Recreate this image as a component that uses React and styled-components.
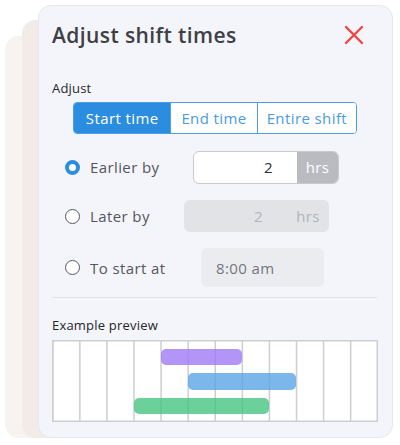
import React from "react";
import styled, { createGlobalStyle } from "styled-components";

const Global = createGlobalStyle`
  html, body { margin: 0; padding: 0; background: #ffffff; }
  body { font-family: "Open Sans", "Noto Sans", sans-serif; }
  * { box-sizing: border-box; }
`;

const Stage = styled.div`
  position: relative;
  width: 400px;
  height: 445px;
  padding: 5px 7px 0 38px;
`;

const BackCard = styled.div`
  position: absolute;
  left: ${(p) => p.$left}px;
  top: ${(p) => p.$top}px;
  width: 120px;
  bottom: 7px;
  border-radius: 14px;
  background: ${(p) => p.$bg};
`;

const Card = styled.div`
  position: relative;
  height: 433px;
  background: #f4f5fa;
  border: 1px solid #e7e8ee;
  border-radius: 13px;
  padding: 9px 14px 0 13px;
  display: flex;
  flex-direction: column;
  color: #2d2e33;
`;

const Header = styled.div`
  height: 40px;
  display: flex;
  align-items: center;
  justify-content: space-between;
  padding-right: 14px;
`;

const Title = styled.h1`
  margin: 0;
  font-size: 21px;
  font-weight: 600;
  color: #3f4046;
  letter-spacing: 0.4px;
`;

const Label = styled.div`
  margin-top: ${(p) => p.$mt}px;
  font-size: 13px;
  line-height: 18px;
  font-weight: 500;
  color: #25262b;
  letter-spacing: 0.2px;
`;

const Segmented = styled.div`
  margin: 5px 0 0 21px;
  display: flex;
  width: 284px;
  height: 32px;
  border: 1.5px solid #4d9de3;
  border-radius: 4px;
  overflow: hidden;
  background: #fff;
`;

const Segment = styled.div`
  width: ${(p) => p.$w}px;
  display: flex;
  align-items: center;
  justify-content: center;
  font-size: 15px;
  letter-spacing: 0.4px;
  background: ${(p) => (p.$active ? "#2b8de0" : "#ffffff")};
  color: ${(p) => (p.$active ? "#ffffff" : "#4a9be3")};
  & + & { border-left: 1.5px solid #4d9de3; }
`;

const Options = styled.div`
  margin-top: 16px;
  padding-left: 13px;
  display: flex;
  flex-direction: column;
  gap: 15px;
`;

const Row = styled.div`
  display: flex;
  align-items: center;
  height: ${(p) => p.$h}px;
`;

const Radio = styled.span`
  width: 15px;
  height: 15px;
  border-radius: 50%;
  flex: none;
  border: ${(p) => (p.$checked ? "4px solid #2b8de0" : "1.5px solid #55565c")};
  background: #fff;
`;

const OptLabel = styled.span`
  margin-left: 10px;
  width: 90px;
  font-size: 15px;
  letter-spacing: 0.4px;
  color: #55565b;
`;

const InputGroup = styled.div`
  margin-left: ${(p) => p.$ml}px;
  width: ${(p) => p.$w}px;
  height: ${(p) => p.$h}px;
  display: flex;
  border-radius: 6px;
  overflow: hidden;
  background: ${(p) => p.$bg};
  border: ${(p) => (p.$bordered ? "1px solid #c9cacf" : "none")};
`;

const Value = styled.div`
  flex: 1;
  display: flex;
  align-items: center;
  justify-content: ${(p) => (p.$left ? "flex-start" : "flex-end")};
  padding: ${(p) => (p.$left ? "0 0 0 15px" : "0 24px 0 0")};
  font-size: 15px;
  letter-spacing: 0.4px;
  color: ${(p) => p.$color};
`;

const Suffix = styled.div`
  width: ${(p) => p.$w}px;
  display: flex;
  align-items: center;
  justify-content: center;
  font-size: 15px;
  letter-spacing: 0.3px;
  background: ${(p) => p.$bg};
  color: ${(p) => p.$color};
`;

const Divider = styled.hr`
  margin: 10px 1px 0 0;
  border: none;
  border-top: 1.5px solid #e0e1e7;
`;

const Chart = styled.svg`
  display: block;
  margin-top: 6px;
`;

const Close = () => (
  <svg width="20" height="20" viewBox="0 0 20 20">
    <path d="M2 2 L18 18 M18 2 L2 18" stroke="#f0463f" strokeWidth="2.4" strokeLinecap="round" />
  </svg>
);

const Preview = () => {
  const w = 326;
  const h = 82;
  const col = (w - 1) / 12;
  const lines = Array.from({ length: 13 }, (_, i) => 0.75 + i * col);
  return (
    <Chart width={w} height={h} viewBox={`0 0 ${w} ${h}`}>
      <rect x="0" y="0" width={w} height={h} fill="#ffffff" />
      <rect x="0.75" y="0.75" width={w - 1.5} height={h - 1.5} fill="none" stroke="#cdced4" strokeWidth="1.5" />
      {lines.map((x) => (
        <line key={x} x1={x} y1="0" x2={x} y2={h} stroke="#cdced4" strokeWidth="1.5" />
      ))}
      <rect x="109" y="9" width="81" height="16" rx="5" fill="#9c77f5" fillOpacity="0.78" />
      <rect x="136" y="33" width="108" height="17" rx="5" fill="#57a3e6" fillOpacity="0.78" />
      <rect x="82" y="58" width="135" height="16" rx="5" fill="#43c37f" fillOpacity="0.78" />
    </Chart>
  );
};

export default function App() {
  return (
    <>
      <Global />
      <Stage>
        <BackCard $left={5} $top={36} $bg="#f7f3f0" />
        <BackCard $left={22} $top={20} $bg="#f2ebe7" />
        <Card>
          <Header>
            <Title>Adjust shift times</Title>
            <Close />
          </Header>
          <Label $mt={24}>Adjust</Label>
          <Segmented>
            <Segment $w={97} $active>Start time</Segment>
            <Segment $w={87}>End time</Segment>
            <Segment $w={100}>Entire shift</Segment>
          </Segmented>
          <Options>
            <Row $h={34}>
              <Radio $checked />
              <OptLabel>Earlier by</OptLabel>
              <InputGroup $ml={13} $w={146} $h={33} $bg="#ffffff" $bordered>
                <Value $color="#2d2e33">2</Value>
                <Suffix $w={41} $bg="#b9bbc1" $color="#ffffff">hrs</Suffix>
              </InputGroup>
            </Row>
            <Row $h={34}>
              <Radio />
              <OptLabel>Later by</OptLabel>
              <InputGroup $ml={4} $w={145} $h={32} $bg="#e2e3e7">
                <Value $color="#b2b4ba">2</Value>
                <Suffix $w={42} $bg="#e2e3e7" $color="#b2b4ba">hrs</Suffix>
              </InputGroup>
            </Row>
            <Row $h={39}>
              <Radio />
              <OptLabel>To start at</OptLabel>
              <InputGroup $ml={21} $w={123} $h={39} $bg="#ebecef">
                <Value $left $color="#75767c">8:00 am</Value>
              </InputGroup>
            </Row>
          </Options>
          <Divider />
          <Label $mt={18}>Example preview</Label>
          <Preview />
        </Card>
      </Stage>
    </>
  );
}
